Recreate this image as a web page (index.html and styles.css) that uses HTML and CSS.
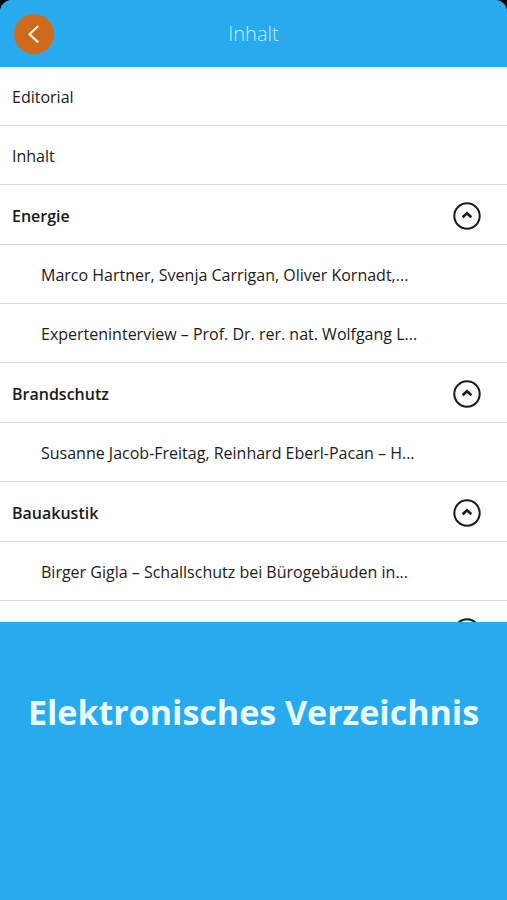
FILE: index.html
```html
<!DOCTYPE html>
<html lang="de">
<head>
    <meta charset="UTF-8">
    <meta name="viewport" content="width=device-width, initial-scale=1.0">
    <title>Inhalt</title>
    <link rel="stylesheet" href="styles.css">
</head>
<body>
    <div class="screen">
        <header class="topbar">
            <button type="button" class="back-btn" aria-label="Zurück">
                <svg viewBox="0 0 40 40" width="40" height="40"><path d="M24.2 12 L15.5 20.2 L24.2 28.4"/></svg>
            </button>
            <h1>Inhalt</h1>
        </header>

        <ul class="toc">
            <li><a href="#editorial">Editorial</a></li>
            <li><a href="#inhalt">Inhalt</a></li>
            <li class="section">
                <span>Energie</span>
                <button type="button" class="toggle-btn" aria-label="Energie einklappen">
                    <svg viewBox="0 0 28 28" width="28" height="28"><circle cx="14" cy="14" r="12.7"/><path d="M9.6 15.2 L14 11.2 L18.4 15.2"/></svg>
                </button>
            </li>
            <li class="article"><a href="#hartner">Marco Hartner, Svenja Carrigan, Oliver Kornadt,...</a></li>
            <li class="article"><a href="#interview">Experteninterview – Prof. Dr. rer. nat. Wolfgang L...</a></li>
            <li class="section">
                <span>Brandschutz</span>
                <button type="button" class="toggle-btn" aria-label="Brandschutz einklappen">
                    <svg viewBox="0 0 28 28" width="28" height="28"><circle cx="14" cy="14" r="12.7"/><path d="M9.6 15.2 L14 11.2 L18.4 15.2"/></svg>
                </button>
            </li>
            <li class="article"><a href="#jacob-freitag">Susanne Jacob-Freitag, Reinhard Eberl-Pacan – H...</a></li>
            <li class="section">
                <span>Bauakustik</span>
                <button type="button" class="toggle-btn" aria-label="Bauakustik einklappen">
                    <svg viewBox="0 0 28 28" width="28" height="28"><circle cx="14" cy="14" r="12.7"/><path d="M9.6 15.2 L14 11.2 L18.4 15.2"/></svg>
                </button>
            </li>
            <li class="article"><a href="#gigla">Birger Gigla – Schallschutz bei Bürogebäuden in...</a></li>
            <li class="section">
                <span></span>
                <button type="button" class="toggle-btn" aria-label="Einklappen">
                    <svg viewBox="0 0 28 28" width="28" height="28"><circle cx="14" cy="14" r="12.7"/><path d="M9.6 15.2 L14 11.2 L18.4 15.2"/></svg>
                </button>
            </li>
        </ul>

        <section class="caption">
            <h2>Elektronisches Verzeichnis</h2>
        </section>
    </div>
</body>
</html>
```

FILE: styles.css
```css
* {
    box-sizing: border-box;
}
body {
    margin: 0;
    background-color: #000000;
    font-family: "Open Sans", "Noto Sans", sans-serif;
    color: #1a1a1a;
}
.screen {
    display: flex;
    flex-direction: column;
    height: 100vh;
    background-color: #27aaee;
    border-radius: 12px 12px 0 0;
    overflow: hidden;
}
.topbar {
    display: grid;
    grid-template-columns: 40px 1fr 40px;
    align-items: center;
    flex: none;
    height: 67px;
    padding: 0 14px;
    background-color: #27aaee;
}
.topbar h1 {
    margin: 0;
    color: #c4f0ff;
    font-size: 20px;
    font-weight: 300;
    text-align: center;
}
.back-btn {
    width: 40px;
    height: 40px;
    padding: 0;
    border: none;
    border-radius: 50%;
    background-color: #cf6a1b;
    cursor: pointer;
}
svg {
    display: block;
    fill: none;
}
.back-btn svg {
    stroke: #fff3dc;
    stroke-width: 2.2;
}
/* list takes two thirds of the space below the bar, the rest is cut off */
.toc {
    flex: 2 1 0;
    min-height: 0;
    margin: 0;
    padding: 0;
    overflow: hidden;
    background-color: #ffffff;
    list-style: none;
}
.toc li {
    display: flex;
    align-items: center;
    justify-content: space-between;
    min-height: 59px;
    padding: 2px 26px 0 12px;
    border-bottom: 1px solid #d9d9d9;
    font-size: 16px;
    line-height: 24px;
}
.toc a {
    color: inherit;
    text-decoration: none;
}
.toc .section {
    min-height: 60px;
    font-weight: 600;
}
.toc .article {
    padding-left: 41px;
}
.toggle-btn {
    padding: 0;
    border: none;
    background: none;
    cursor: pointer;
}
.toggle-btn svg {
    stroke: #1a1a1a;
    stroke-width: 2;
}
.toggle-btn path {
    stroke-width: 2.6;
}
.caption {
    flex: 1 1 0;
    text-align: center;
}
.caption h2 {
    margin: 0;
    padding: 64px 20px 0;
    color: #e9fbff;
    font-size: 34px;
    font-weight: 700;
    line-height: 52px;
}
```
